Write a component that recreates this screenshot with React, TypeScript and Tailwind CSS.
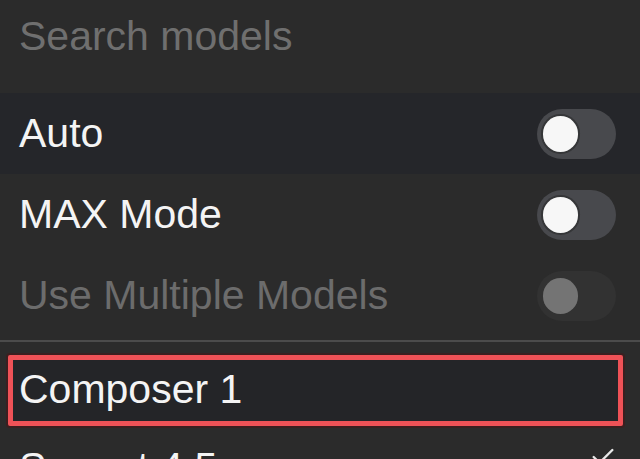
import React from "react";

function Toggle({ disabled }: { disabled?: boolean }) {
  return (
    <div
      className={
        "flex h-[50px] w-[79px] shrink-0 items-center rounded-full pl-[6px] " +
        (disabled ? "bg-[#323232]" : "bg-[#48494d]")
      }
    >
      <div
        className={
          "h-[36px] w-[35px] rounded-full " +
          (disabled
            ? "bg-[#747474]"
            : "bg-[#f7f7f7] shadow-[0_0_0_2px_rgba(30,30,30,0.45)]")
        }
      />
    </div>
  );
}

function Row({
  label,
  dim,
  active,
}: {
  label: string;
  dim?: boolean;
  active?: boolean;
}) {
  return (
    <div
      className={
        "flex h-[81px] shrink-0 items-center justify-between pl-[19px] pr-[24px] " +
        (active ? "bg-[#25262a]" : "")
      }
    >
      <span
        className={
          "text-[41px] leading-[41px] " +
          (dim ? "text-[#6c6c6c]" : "text-[#f4f4f4]")
        }
      >
        {label}
      </span>
      <Toggle disabled={dim} />
    </div>
  );
}

export default function App() {
  return (
    <div
      className="flex h-[459px] w-full flex-col overflow-hidden bg-[#2b2b2b]"
      style={{ fontFamily: '"Liberation Sans", Arial, sans-serif' }}
    >
      <div className="h-[93px] shrink-0 px-[19px] pt-[16px]">
        <span className="text-[41px] leading-[41px] text-[#6f6f6f]">
          Search models
        </span>
      </div>
      <Row label="Auto" active />
      <Row label="MAX Mode" />
      <Row label="Use Multiple Models" dim />
      <div className="mt-[4px] h-[2px] shrink-0 bg-[#4b4b4b]" />
      <div className="ml-[8px] mr-[17px] mt-[13px] flex h-[71px] shrink-0 items-center rounded-[2px] border-[5px] border-[#ef5257] bg-[#242528] pb-[3px] pl-[6px] shadow-[0_0_0_2px_#3b1f20]">
        <span className="text-[41px] leading-[41px] text-[#f4f4f4]">
          Composer 1
        </span>
      </div>
      <div className="mt-[2px] flex h-[78px] shrink-0 items-start justify-between pl-[19px] pr-[23px]">
        <span className="mt-[19px] text-[41px] leading-[41px] text-[#f4f4f4]">
          Sonnet 4.5
        </span>
        <svg
          className="mt-[15px]"
          width="28"
          height="28"
          viewBox="0 0 24 24"
          fill="none"
          stroke="#e8e8e8"
          strokeWidth="2"
          strokeLinecap="round"
          strokeLinejoin="round"
        >
          <path d="M20 6 9 17l-5-5" />
        </svg>
      </div>
    </div>
  );
}
